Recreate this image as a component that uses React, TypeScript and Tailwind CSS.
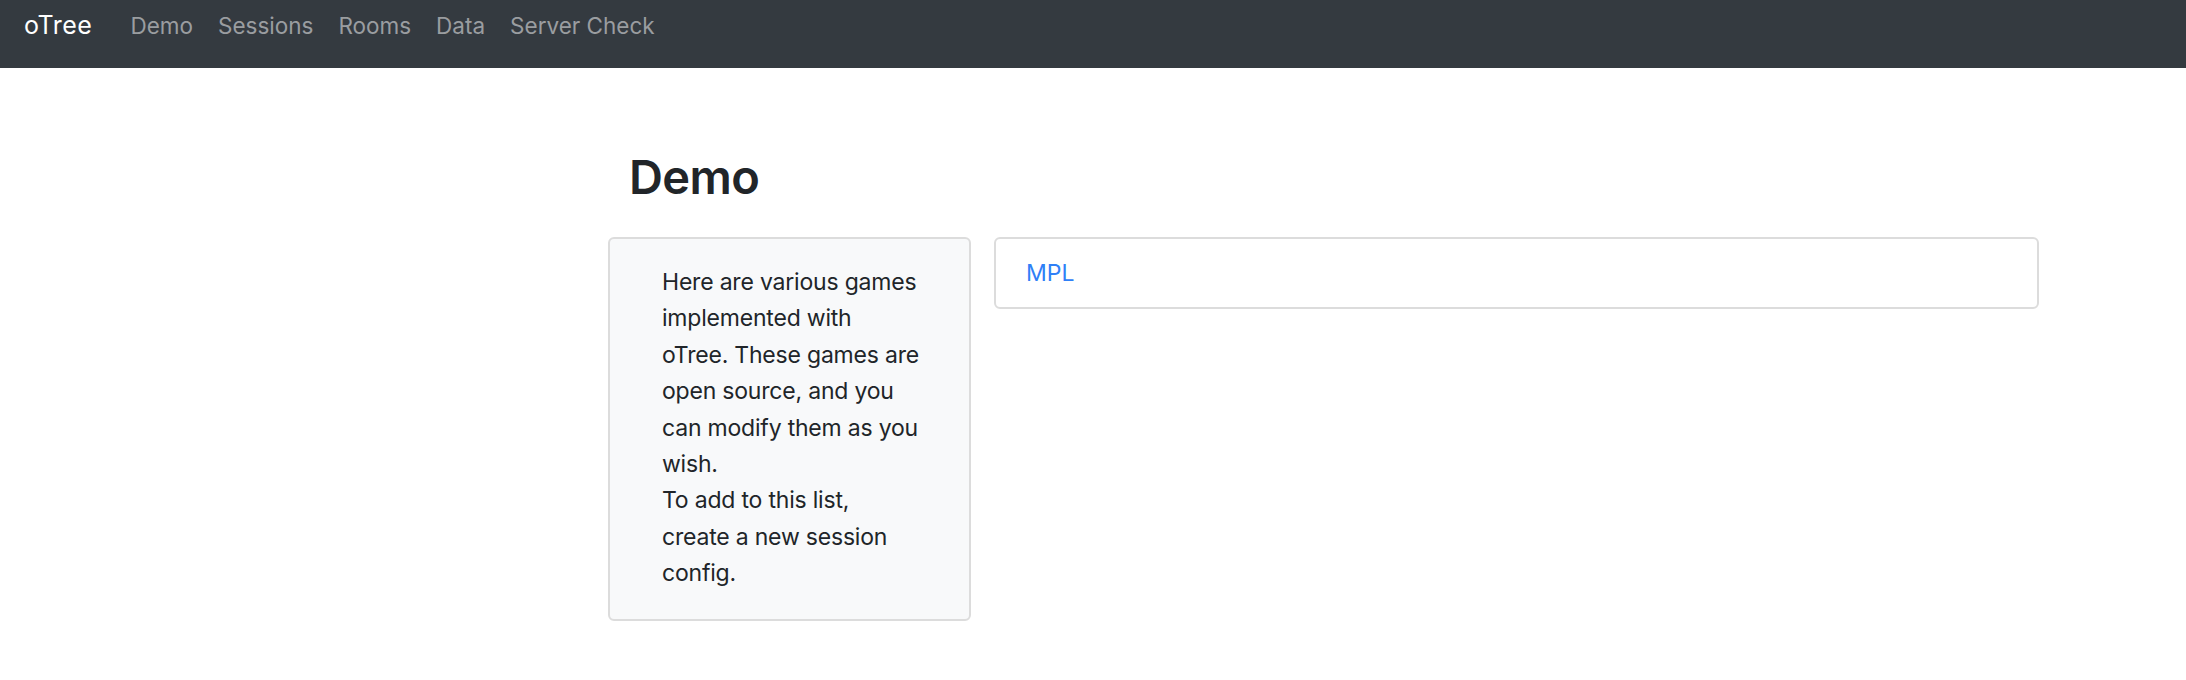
import React from "react";

const font = { fontFamily: "Inter, 'Noto Sans', sans-serif" };

export default function App() {
  const links = ["Demo", "Sessions", "Rooms", "Data", "Server Check"];
  return (
    <div className="min-h-[680px] bg-white text-[#212529]" style={font}>
      <nav className="h-[68px] bg-[#343a40] flex items-start pt-[9px] pl-[24px]">
        <span className="text-white text-[25px] leading-[33px] tracking-[0.5px]">oTree</span>
        <div className="flex gap-[25px] ml-[38px]">
          {links.map((l) => (
            <span key={l} className="text-[#9a9da0] text-[22.5px] leading-[33px]">
              {l}
            </span>
          ))}
        </div>
      </nav>
      <main className="pl-[608px] pt-[80px]">
        <h2 className="pl-[21px] text-[47px] leading-[58px] font-semibold tracking-[-0.6px] text-[#212529]">
          Demo
        </h2>
        <div className="flex items-start gap-[23px] mt-[31px]">
          <div className="w-[363px] h-[384px] bg-[#f8f9fa] border-2 border-[#dcdcdc] rounded-[6px] pl-[52px] pt-[25px]">
            <p className="w-[258px] text-[23px] leading-[36.4px] tracking-[-0.2px]">
              Here are various games implemented with oTree. These games are open source, and you can modify them as you wish.
              <br />
              To add to this list, create a new session config.
            </p>
          </div>
          <div className="w-[1045px] h-[72px] bg-white border-2 border-[#dcdcdc] rounded-[6px] flex items-center pl-[30px]">
            <a className="text-[#2f80f7] text-[23px] leading-[36px]">MPL</a>
          </div>
        </div>
      </main>
    </div>
  );
}
